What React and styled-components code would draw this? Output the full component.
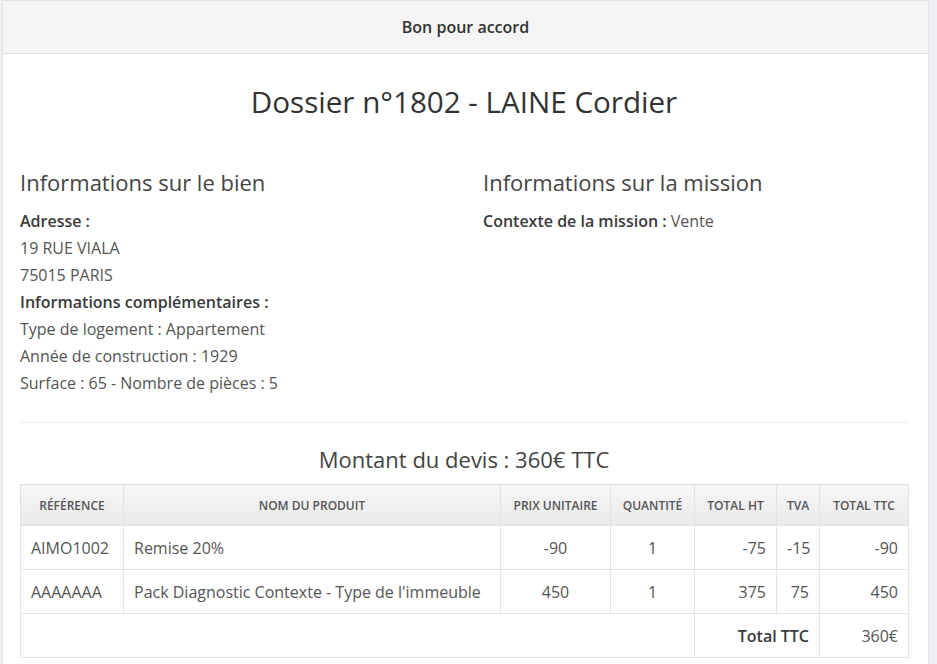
import React from "react";
import styled, { createGlobalStyle } from "styled-components";

const GlobalStyle = createGlobalStyle`
   body {
      margin: 0;
      background: #eef0f3;
      font-family: "Open Sans", "Liberation Sans", sans-serif;
      color: #555;
   }
`;

const lines = [
   { ref: "AIMO1002", name: "Remise 20%", pu: "-90", qty: "1", ht: "-75", tva: "-15", ttc: "-90" },
   {
      ref: "AAAAAAA",
      name: "Pack Diagnostic Contexte - Type de l'immeuble",
      pu: "450",
      qty: "1",
      ht: "375",
      tva: "75",
      ttc: "450",
   },
];

const App = () => {
   return (
      <>
         <GlobalStyle />
         <Panel>
            <PanelHeader>Bon pour accord</PanelHeader>
            <PanelBody>
               <Title>Dossier n°1802 - LAINE Cordier</Title>
               <Columns>
                  <div>
                     <SubTitle>Informations sur le bien</SubTitle>
                     <Line>
                        <b>Adresse :</b>
                     </Line>
                     <Line>19 RUE VIALA</Line>
                     <Line>75015 PARIS</Line>
                     <Line>
                        <b>Informations complémentaires :</b>
                     </Line>
                     <Line>Type de logement : Appartement</Line>
                     <Line>Année de construction : 1929</Line>
                     <Line>Surface : 65 - Nombre de pièces : 5</Line>
                  </div>
                  <div>
                     <SubTitle>Informations sur la mission</SubTitle>
                     <Line>
                        <b>Contexte de la mission :</b> Vente
                     </Line>
                  </div>
               </Columns>
               <Divider />
               <Amount>Montant du devis : 360€ TTC</Amount>
               <Table>
                  <colgroup>
                     <col style={{ width: 103 }} />
                     <col style={{ width: 377 }} />
                     <col style={{ width: 110 }} />
                     <col style={{ width: 84 }} />
                     <col style={{ width: 82 }} />
                     <col style={{ width: 43 }} />
                     <col style={{ width: 89 }} />
                  </colgroup>
                  <thead>
                     <tr>
                        <Th>Référence</Th>
                        <Th>Nom du produit</Th>
                        <Th>Prix unitaire</Th>
                        <Th>Quantité</Th>
                        <Th>Total HT</Th>
                        <Th>TVA</Th>
                        <Th>Total TTC</Th>
                     </tr>
                  </thead>
                  <tbody>
                     {lines.map((l) => (
                        <tr key={l.ref}>
                           <Td>{l.ref}</Td>
                           <Td>{l.name}</Td>
                           <Td $align="center">{l.pu}</Td>
                           <Td $align="center">{l.qty}</Td>
                           <Td $align="right">{l.ht}</Td>
                           <Td $align="right">{l.tva}</Td>
                           <Td $align="right">{l.ttc}</Td>
                        </tr>
                     ))}
                     <tr>
                        <Td colSpan={4} />
                        <Td colSpan={2} $align="right" $bold>
                           Total TTC
                        </Td>
                        <Td $align="right">360€</Td>
                     </tr>
                  </tbody>
               </Table>
            </PanelBody>
         </Panel>
      </>
   );
};

export default App;

const Panel = styled.div`
   margin-left: 2px;
   width: 925px;
   background: #fff;
   border: 1px solid #dfe3e8;
   min-height: 700px;
`;

const PanelHeader = styled.div`
   height: 52px;
   display: flex;
   align-items: center;
   justify-content: center;
   background: #f5f5f5;
   border-bottom: 1px solid #dfe3e8;
   font-size: 16px;
   font-weight: 600;
   color: #333;
`;

const PanelBody = styled.div`
   padding: 0 20px 0 17px;
`;

const Title = styled.h1`
   margin: 28px 0 0;
   text-align: center;
   font-size: 29.6px;
   font-weight: 400;
   line-height: 40px;
   color: #333;
`;

const Columns = styled.div`
   display: grid;
   grid-template-columns: 463px 1fr;
   margin-top: 45px;
`;

const SubTitle = styled.h3`
   margin: 0 0 11px;
   font-size: 22px;
   font-weight: 400;
   line-height: 30px;
   color: #444;
`;

const Line = styled.div`
   font-size: 16px;
   line-height: 27px;
   color: #555;
   b {
      font-weight: 600;
      color: #3a3a3a;
   }
`;

const Divider = styled.hr`
   border: 0;
   border-top: 1px solid #eee;
   margin: 25px 0 0;
`;

const Amount = styled.h3`
   margin: 21px 0 10px;
   text-align: center;
   font-size: 22px;
   font-weight: 400;
   line-height: 30px;
   color: #444;
`;

const Table = styled.table`
   width: 888px;
   border-collapse: collapse;
   table-layout: fixed;
   border: 1px solid #e4e4e4;
   font-size: 16px;
   color: #555;
`;

const Th = styled.th`
   height: 40px;
   padding: 0 6px;
   text-align: center;
   text-transform: uppercase;
   font-size: 12px;
   font-weight: 600;
   color: #555;
   background: linear-gradient(#f7f7f7, #e9e9e9);
   border: 1px solid #e1e1e1;
   white-space: nowrap;
`;

const Td = styled.td`
   height: 43px;
   padding: 0 10px;
   text-align: ${(p) => p.$align || "left"};
   font-weight: ${(p) => (p.$bold ? 600 : 400)};
   color: ${(p) => (p.$bold ? "#3a3a3a" : "#555")};
   border: 1px solid #e4e4e4;
   white-space: nowrap;
`;
